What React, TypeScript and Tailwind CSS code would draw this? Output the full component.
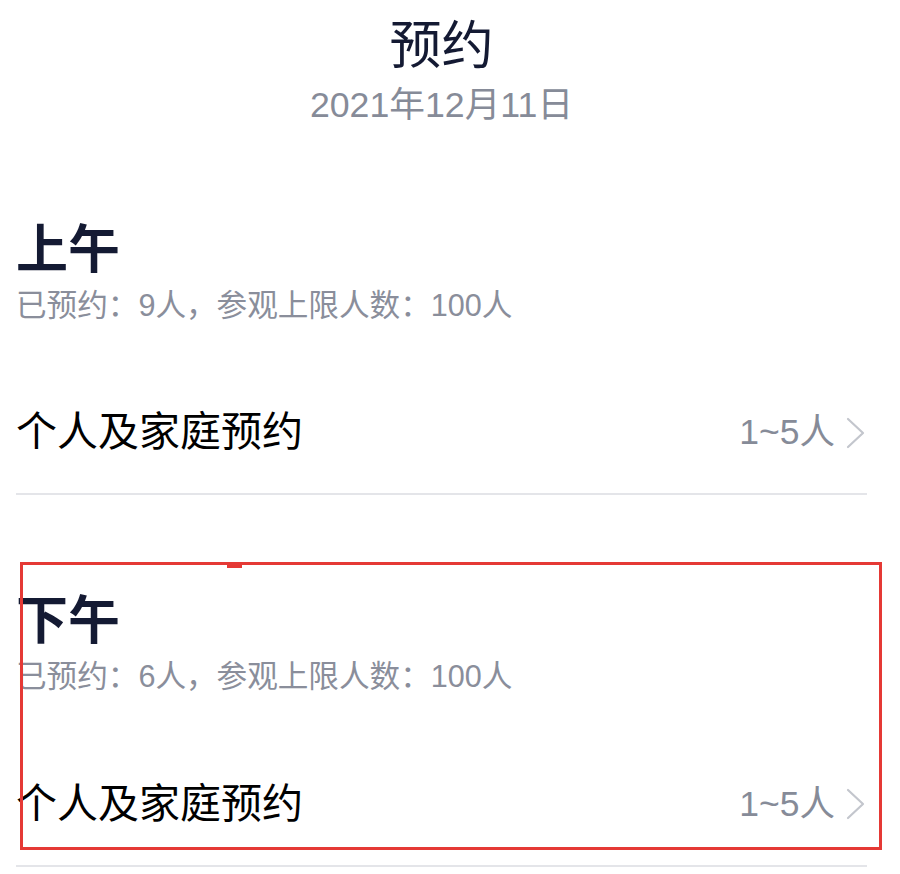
import React from "react";

const font = { fontFamily: '"Liberation Sans", "Noto Sans CJK SC", sans-serif' };

function Chevron() {
  return (
    <svg width="22" height="34" viewBox="0 0 22 34" fill="none" className="ml-[10px]">
      <path d="M3 3 L18 17 L3 31" stroke="#c3c6cd" strokeWidth="2.2" strokeLinecap="round" strokeLinejoin="round" />
    </svg>
  );
}

function Section({ title, booked }: { title: string; booked: number }) {
  return (
    <div className="flex flex-col">
      <div className="text-[52px] leading-none font-bold text-[#141a33]">{title}</div>
      <div className="mt-[14px] text-[30.6px] leading-none text-[#8a8e9b]">
        已预约：{booked}人，参观上限人数：100人
      </div>
      <div className="mt-[92px] flex items-center justify-between">
        <div className="text-[41px] leading-none text-black">个人及家庭预约</div>
        <div className="flex items-center">
          <span className="text-[35.5px] leading-none text-[#868b98]">1~5人</span>
          <Chevron />
        </div>
      </div>
      <div className="mt-[40px] h-[2px] bg-[#e4e5e9]" />
    </div>
  );
}

export default function App() {
  return (
    <div className="relative w-[900px] h-[874px] bg-white overflow-hidden" style={font}>
      <div className="flex flex-col pl-[16px] pr-[33px]">
        <div className="flex flex-col items-center pt-[20px]">
          <div className="text-[52px] leading-none text-[#141a33]">预约</div>
          <div className="mt-[16px] text-[35.7px] leading-none text-[#868b98]">2021年12月11日</div>
        </div>
        <div className="flex flex-col mt-[100px] gap-[100px]">
          <Section title="上午" booked={9} />
          <Section title="下午" booked={6} />
        </div>
      </div>
      <div className="absolute left-[20px] top-[562px] w-[862px] h-[288px] border-[3px] border-[#e53935]" />
      <div className="absolute left-[227px] top-[562px] w-[15px] h-[6px] bg-[#e53935]" />
    </div>
  );
}
